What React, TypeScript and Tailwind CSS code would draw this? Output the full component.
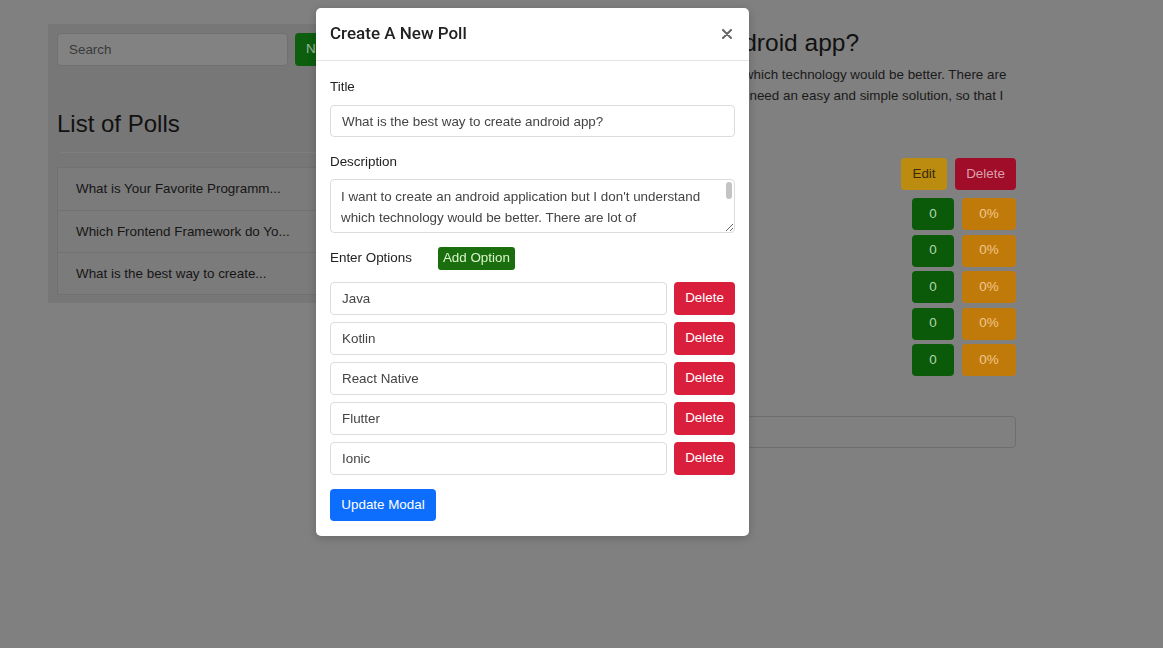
import { useState } from "react";

const polls = [
  "What is Your Favorite Programm...",
  "Which Frontend Framework do Yo...",
  "What is the best way to create...",
];

const description =
  "I want to create an android application but I don't understand which technology would be better. There are lot of technologies available in the market to build new apps. I need an easy and simple solution, so that I can learn it quickly.";

export default function App() {
  const [title, setTitle] = useState("What is the best way to create android app?");
  const [desc, setDesc] = useState(description);
  const [options, setOptions] = useState([
    "Java",
    "Kotlin",
    "React Native",
    "Flutter",
    "Ionic",
  ]);

  function updateOption(index: number, value: string) {
    setOptions(options.map((o, i) => (i === index ? value : o)));
  }

  function deleteOption(index: number) {
    setOptions(options.filter((_, i) => i !== index));
  }

  return (
    <main className="min-h-screen bg-[#808080] font-['Liberation_Sans',Arial,sans-serif] text-[13.4px] text-[#151515]">
      <div className="flex gap-[5px] pl-[48px] pt-[24px]">
        {/* left: poll list */}
        <aside className="w-[328px]">
          <div className="bg-[#777777] px-[9px] pt-[9px] pb-[8px]">
            <div className="flex gap-[7px]">
              <input
                placeholder="Search"
                className="h-[33px] w-[231px] rounded-[4px] border border-[#707070] bg-[#828282] px-[11px] text-[#2a2a2a] placeholder:text-[#3a3a3a] outline-none"
              />
              <button className="h-[33px] rounded-[4px] bg-[#0d5e0f] px-[11px] text-[#9fb89f]">
                New
              </button>
            </div>

            <h2 className="mt-[43px] text-[24px] leading-[29px] text-[#111]">List of Polls</h2>
            <hr className="mx-[4px] mt-[14px] border-[#7e7e7e]" />

            <ul className="mt-[14px] border border-[#717171] bg-[#7b7b7b]">
              {polls.map((p, i) => (
                <li
                  key={p}
                  className={`h-[42px] px-[18px] leading-[42px] text-[#161616] ${
                    i > 0 ? "border-t border-[#717171]" : ""
                  }`}
                >
                  {p}
                </li>
              ))}
            </ul>
          </div>
        </aside>

        {/* right: poll detail */}
        <section className="w-[635px] pt-[4px]">
          <h1 className="text-[24.5px] leading-[30px] text-[#111]">
            What is the best way to create android app?
          </h1>
          <p className="mt-[6px] leading-[21px] text-[#1a1a1a]">{description}</p>

          <div className="mt-[31px] flex justify-end gap-[8px]">
            <button className="h-[32px] w-[46px] rounded-[4px] bg-[#bb8c10] text-[#3a2a05]">Edit</button>
            <button className="h-[32px] w-[61px] rounded-[4px] bg-[#a00d28] text-[#d9a0aa]">Delete</button>
          </div>

          <div className="mt-[8px] flex flex-col gap-[4.5px]">
            {["Java", "Kotlin", "React Native", "Flutter", "Ionic"].map((o) => (
              <div key={o} className="flex h-[32px] items-center justify-between">
                <span className="pl-[12px] text-[#1a1a1a]">{o}</span>
                <div className="flex gap-[8px]">
                  <span className="flex h-[32px] w-[42px] items-center justify-center rounded-[4px] bg-[#0a5a0a] text-[#b3d6b0]">
                    0
                  </span>
                  <span className="flex h-[32px] w-[54px] items-center justify-center rounded-[4px] bg-[#c07a0a] text-[#f0c890]">
                    0%
                  </span>
                </div>
              </div>
            ))}
          </div>

          <input className="mt-[40px] h-[32px] w-full rounded-[4px] border border-[#6e6e6e] bg-[#808080] outline-none" />
        </section>
      </div>

      {/* modal */}
      <div className="fixed left-[316px] top-[8px] w-[433px] rounded-[5px] bg-white shadow-[0_2px_10px_rgba(0,0,0,0.2)]">
        <div className="flex h-[53px] items-center justify-between border-b border-[#e3e3e3] px-[14px]">
          <h3 className="font-['Roboto',Arial,sans-serif] text-[17px] font-medium text-[#222]">Create A New Poll</h3>
          <button className="flex h-[16px] w-[16px] items-center justify-center" aria-label="Close">
            <svg width="10" height="10" viewBox="0 0 10 10">
              <path d="M1 1L9 9M9 1L1 9" stroke="#666" strokeWidth="2" strokeLinecap="round" />
            </svg>
          </button>
        </div>

        <div className="px-[14px] pt-[16px] pb-[15px]">
          <label className="block leading-[20px] text-[#222]">Title</label>
          <input
            value={title}
            onChange={(e) => setTitle(e.target.value)}
            className="mt-[8px] h-[32px] w-full rounded-[4px] border border-[#dcdcdc] px-[11px] text-[#444] outline-none"
          />

          <label className="mt-[15px] block leading-[20px] text-[#222]">Description</label>
          <div className="relative mt-[7px]">
            <textarea
              value={desc}
              onChange={(e) => setDesc(e.target.value)}
              className="block h-[54px] w-full rounded-[4px] border border-[#dcdcdc] pl-[10px] pr-[26px] pt-[6px] leading-[21px] text-[#444] outline-none"
            />
            {/* scrollbar thumb */}
            <span className="pointer-events-none absolute right-[3px] top-[3px] h-[17px] w-[6px] rounded-full bg-[#c4c4c4]" />
          </div>

          <div className="mt-[13px] flex h-[24px] items-center gap-[26px]">
            <span className="text-[#222]">Enter Options</span>
            <button
              onClick={() => setOptions([...options, ""])}
              className="h-[23px] rounded-[3px] bg-[#1b6e0e] px-[5px] text-[#d8f5cc]"
            >
              Add Option
            </button>
          </div>

          <div className="mt-[12px] flex flex-col gap-[7px]">
            {options.map((o, i) => (
              <div key={i} className="flex gap-[7px]">
                <input
                  value={o}
                  onChange={(e) => updateOption(i, e.target.value)}
                  className="h-[33px] flex-1 rounded-[4px] border border-[#dcdcdc] px-[11px] text-[#444] outline-none"
                />
                <button
                  onClick={() => deleteOption(i)}
                  className="h-[33px] w-[61px] rounded-[4px] bg-[#d91f3c] text-white"
                >
                  Delete
                </button>
              </div>
            ))}
          </div>

          <button className="mt-[14px] h-[32px] w-[106px] rounded-[4px] bg-[#0d6efd] text-white">
            Update Modal
          </button>
        </div>
      </div>
    </main>
  );
}
